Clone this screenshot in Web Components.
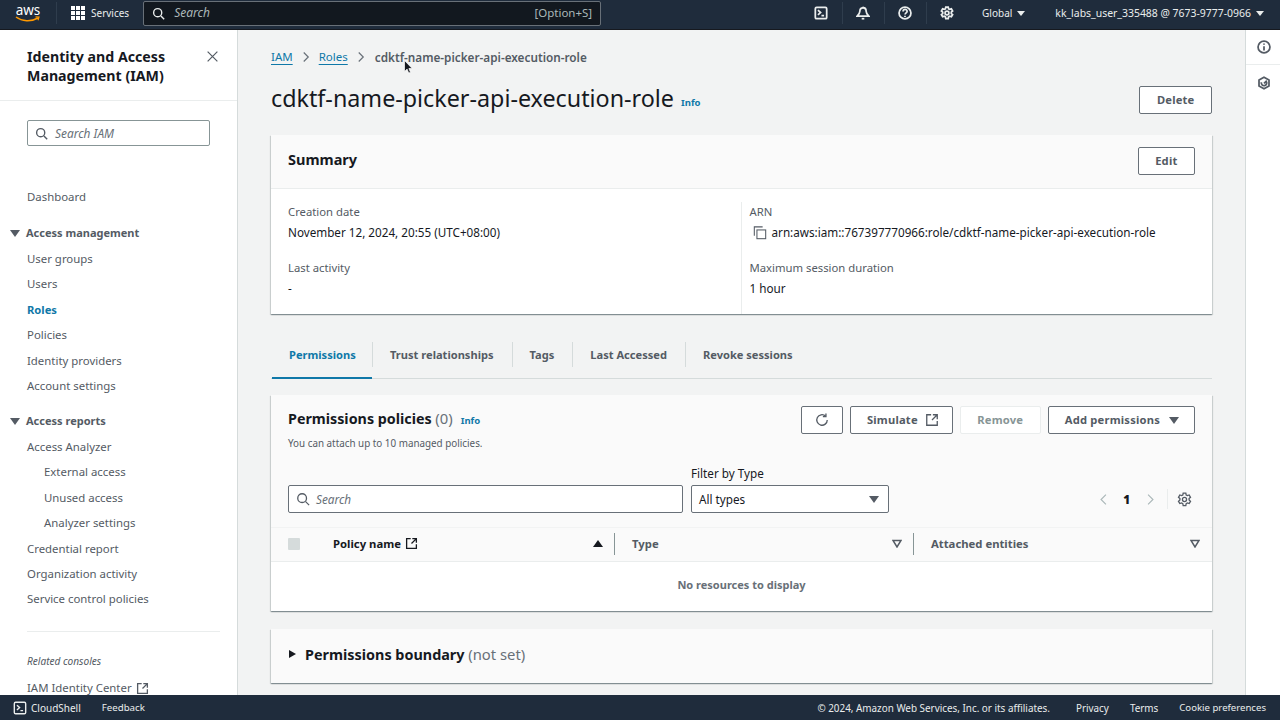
<!DOCTYPE html>
<html lang="en"><head><meta charset="utf-8"><title>IAM Role</title>
<style>
html,body{margin:0;padding:0;height:100%;overflow:hidden;background:#f2f3f3}
body{font:12px/18px "Noto Sans","Open Sans",sans-serif;color:#16191f}
</style></head><body>
<iam-app></iam-app>
<script>
const ICONS={
search:'<circle cx="7" cy="7" r="5"/><path d="M11 11l4 4"/>',
close:'<path d="M2 2l12 12M14 2L2 14"/>',
external:'<path d="M7 2H2v12h12V9" /><path d="M9 2h5v5M14 2L8 8"/>',
refresh:'<path d="M14 8a6 6 0 1 1-2-4.5"/><path d="M12.5 0.5v3.5H9"/>',
gear:'<path d="M6.6 1.2h2.8l.4 2 1.3.7 1.9-.7 1.4 2.5-1.5 1.3v1.6l1.5 1.3-1.4 2.4-1.9-.6-1.3.7-.4 2.1H6.6l-.4-2.1-1.3-.7-1.9.6-1.4-2.4L3.100 8.600V7l-1.500-1.300L3 3.200l1.900.7 1.300-.7z"/><circle cx="8" cy="8" r="2.200"/>',
left:'<path d="M11 2L5 8l6 6"/>',
right:'<path d="M5 2l6 6-6 6"/>',
shell:'<rect x="1.500" y="1.500" width="13" height="13" rx="1.500"/><path d="M4.500 4.800L7.500 7.500 4.500 10.200M8.500 11h3"/>',
bell:'<path d="M8 .8v1.200"/><path d="M8 2c-2.600 0-3.600 1.800-3.600 4 0 2.400-1 3.600-3 5.500h13.200c-2-1.900-3-3.100-3-5.500 0-2.200-1-4-3.600-4z"/><path d="M6.500 14.500h3"/>',
help:'<circle cx="8" cy="8" r="6.800"/><path d="M5.800 6.200c0-3 4.600-3 4.600-.2 0 1.800-2.300 1.800-2.300 3.700"/><path d="M8 11.200v1.300"/>',
info:'<circle cx="8" cy="8" r="6.800"/><path d="M8 7v5M8 4v1.500"/>',
hex:'<path d="M8 1.400l5.700 3.300v6.600L8 14.600l-5.700-3.300V4.700z"/><path d="M5 7.200a3.100 3.100 0 1 0 5.500-1.200L8 8.400"/>',
copy:'<path d="M11 1H1.500v10"/><rect x="4.500" y="4.500" width="10" height="10"/>'
};
function def(name,css,html,init){
  customElements.define(name,class extends HTMLElement{
    connectedCallback(){
      if(this.shadowRoot)return;
      const r=this.attachShadow({mode:'open'});
      r.innerHTML='<style>'+css+'</style>'+(typeof html==='function'?html(this):html);
      if(init)init(this,r);
    }
  });
}
const BLUE='#0f78a8';
def('aws-icon',':host{display:inline-flex;flex:none;vertical-align:middle}svg{display:block;fill:none;stroke:currentColor;stroke-width:var(--sw,1.7);width:100%;height:100%}',
  h=>`<svg viewBox="0 0 16 16">${ICONS[h.getAttribute('name')]}</svg>`);
def('aws-caret',':host{display:inline-block;flex:none;width:0;height:0;border-left:5px solid transparent;border-right:5px solid transparent;border-top:7px solid currentColor}','');

def('aws-button',`:host{display:inline-flex;box-sizing:border-box;height:28px;align-items:center;justify-content:center;gap:7px;padding:0 16.500px;background:#fff;border:1px solid #687078;border-radius:2px;color:#545b64;font-weight:700;font-size:11.200px;letter-spacing:.2px;white-space:nowrap}
:host([disabled]){border-color:#eaeded;color:#879596}`,'<slot></slot>');

def('side-link',`:host{display:flex;align-items:center;height:25.400px;color:#545b64;font-size:11.400px;padding-left:27px;white-space:nowrap}
:host([sub]){padding-left:44px}:host([active]){color:${BLUE};font-weight:700;font-size:11.200px}`,'<slot></slot>');
def('side-group',`:host{display:flex;align-items:center;height:26.400px;color:#545b64;font-weight:700;font-size:11px;padding-left:10px;gap:6px;white-space:nowrap}`,'<aws-caret></aws-caret><slot></slot>');

def('aws-topbar',`:host{display:flex;flex:none;align-items:center;height:30px;box-sizing:border-box;padding-bottom:3px;background:#1f2c3c;color:#eaeded;font-size:10px;border-bottom:1px solid #16191f;white-space:nowrap}
.logo{display:flex;flex-direction:column;align-items:center;width:26px;margin-left:15px;flex:none;color:#fff;font-size:13.500px;line-height:12px}
.logo svg{display:block;width:26px;height:7px;margin-top:0}
.sep{flex:none;width:1px;height:22px;background:#2f3d4d}
.svc{display:flex;align-items:center;gap:6px;margin-left:14px}
.grid{display:grid;grid-template-columns:repeat(3,4px);gap:1px}.grid i{width:4px;height:4px;background:#fff}
.search{display:flex;align-items:center;box-sizing:border-box;margin-left:14px;width:458px;height:25px;background:#12181f;border:1px solid #687078;border-radius:2px;padding:0 8px;color:#aab7b8;font-size:12px}
.search aws-icon{width:13px;height:13px;color:#eaeded;margin-right:9px}
.search em{flex:1}.search span{font-size:11.500px}
.ic{width:14px;height:14px;color:#eaeded;--sw:2}
.right{display:flex;align-items:center;margin-left:auto;padding-right:16px}
.right .sep{margin:0 13.500px}
.right aws-caret{border-left-width:4px;border-right-width:4px;border-top-width:5px;margin-left:5px}
.right .m{display:flex;align-items:center;font-size:10.450px}`,
`<div class="logo"><span>aws</span><svg viewBox="0 0 26 7"><path d="M1 1c6 4.500 15 5 22 1" fill="none" stroke="#f90" stroke-width="1.500"/><path d="M20.500 .8l3.500.3-1 3.200" fill="none" stroke="#f90" stroke-width="1.200"/></svg></div>
<span class="sep" style="margin-left:15px"></span>
<div class="svc"><div class="grid">${'<i></i>'.repeat(9)}</div><span>Services</span></div>
<div class="search"><aws-icon name="search"></aws-icon><em>Search</em><span>[Option+S]</span></div>
<div class="right">
<aws-icon class="ic" name="shell"></aws-icon><span class="sep"></span>
<aws-icon class="ic" name="bell"></aws-icon><span class="sep"></span>
<aws-icon class="ic" name="help"></aws-icon><span class="sep"></span>
<aws-icon class="ic" name="gear"></aws-icon>
<div class="m" style="margin-left:28px;font-size:10px">Global<aws-caret></aws-caret></div>
<div class="m" style="margin-left:30px">kk_labs_user_335488 @ 7673-9777-0966<aws-caret></aws-caret></div>
</div>`);

def('aws-sidenav',`:host{display:block;flex:none;width:238px;box-sizing:border-box;background:#fff;border-right:1px solid #d5dbdb;overflow:hidden;color:#545b64}
header{display:flex;justify-content:space-between;align-items:flex-start;height:71px;box-sizing:border-box;padding:17px 18px 0 27px;border-bottom:1px solid #eaeded;color:#16191f;font-weight:700;font-size:14.200px;line-height:19px}
header aws-icon{width:13px;height:13px;margin-top:3px;--sw:1.500;color:#545b64}
.s{display:flex;align-items:center;box-sizing:border-box;height:26px;margin:19px 27px 0;width:183px;border:1px solid #879596;border-radius:2px;padding:0 7px;font-style:italic;color:#687078;font-size:11.900px;gap:7px}
.s aws-icon{width:13px;height:13px;color:#545b64}
nav{margin-top:38.500px}
.g1{height:10.100px}.g2{height:9.300px}
hr{border:0;border-top:1px solid #eaeded;margin:19px 17px 0 27px}
.rc{padding-left:27px;font-style:italic;font-size:10.100px;margin-top:20px;height:23.300px}
.ext{width:13px;height:13px;margin-left:4px;--sw:1.600}`,
`<header><span>Identity and Access<br>Management (IAM)</span><aws-icon name="close"></aws-icon></header>
<div class="s"><aws-icon name="search"></aws-icon>Search IAM</div>
<nav>
<side-link>Dashboard</side-link><div class="g1"></div>
<side-group>Access management</side-group>
<side-link>User groups</side-link><side-link>Users</side-link><side-link active>Roles</side-link><side-link>Policies</side-link><side-link>Identity providers</side-link><side-link>Account settings</side-link>
<div class="g2"></div>
<side-group>Access reports</side-group>
<side-link>Access Analyzer</side-link><side-link sub>External access</side-link><side-link sub>Unused access</side-link><side-link sub>Analyzer settings</side-link><side-link>Credential report</side-link><side-link>Organization activity</side-link><side-link>Service control policies</side-link>
<hr>
<div class="rc">Related consoles</div>
<side-link>IAM Identity Center<aws-icon class="ext" name="external"></aws-icon></side-link>
</nav>`);

def('aws-breadcrumb',`:host{display:flex;align-items:center;height:18px;font-size:11.500px;color:#545b64;white-space:nowrap}
a{color:${BLUE};text-decoration:underline;text-underline-offset:3px;text-decoration-thickness:1px}
aws-icon{width:12px;height:12px;margin:0 7px;--sw:1.600;color:#687078}b{font-weight:600;font-size:11.750px;margin-left:1px}`,
`<a>IAM</a><aws-icon name="right"></aws-icon><a>Roles</a><aws-icon name="right"></aws-icon><b>cdktf-name-picker-api-execution-role</b>`);

def('aws-card',`:host{display:block;background:#fff;box-shadow:0 1px 1px 0 rgba(0,28,36,.3),1px 1px 1px 0 rgba(0,28,36,.12),-1px 1px 1px 0 rgba(0,28,36,.12);}`,'<slot></slot>');

def('kv-pair',`:host{display:block;font-size:11.700px;line-height:20px;color:#16191f}.k{color:#545b64;font-size:11.300px}
.v{display:flex;align-items:center;white-space:nowrap}aws-icon{width:14px;height:14px;margin:1px 5px 0 3px;--sw:1.200;color:#545b64}`,
h=>`<div class="k">${h.getAttribute('k')}</div><div class="v">${h.hasAttribute('copy')?'<aws-icon name="copy"></aws-icon>':''}<slot></slot></div>`);

def('role-summary',`:host{display:block}
.h{display:flex;justify-content:space-between;align-items:center;height:52px;padding:0 17px 1px;background:#fafafa;border-bottom:1px solid #eaeded;box-sizing:content-box}
h2{margin:0 0 4px;font-size:14.500px;font-weight:700}
.b{display:grid;grid-template-columns:1fr 1fr;height:125px;box-sizing:border-box;padding:13px 0 0}
.c{display:flex;flex-direction:column;gap:16px;padding-left:17px}
.c+.c{border-left:1px solid #eaeded;padding-left:8px;margin-left:-1px}`,
`<aws-card><div class="h"><h2>Summary</h2><aws-button>Edit</aws-button></div>
<div class="b"><div class="c"><kv-pair k="Creation date">November 12, 2024, 20:55 (UTC+08:00)</kv-pair><kv-pair k="Last activity">-</kv-pair></div>
<div class="c"><kv-pair k="ARN" copy>arn:aws:iam::767397770966:role/cdktf-name-picker-api-execution-role</kv-pair><kv-pair k="Maximum session duration">1 hour</kv-pair></div></div></aws-card>`);

def('aws-tabs',`:host{display:flex;height:39px;box-sizing:border-box;margin:26px 0 16px;border-bottom:1px solid #d5dbdb;font-weight:700;font-size:11.100px;color:#545b64;padding-left:1px}
.t{display:flex;align-items:center;padding:0 18px 0 17px;height:25px;margin-top:2px;border-left:1px solid #d5dbdb;white-space:nowrap}
.t:first-of-type{border-left:0;color:${BLUE};height:39px;box-sizing:border-box;margin-top:0;padding:0 17px 7px 17px;border-bottom:2px solid ${BLUE};width:100px}`,
`<div class="t">Permissions</div><div class="t">Trust relationships</div><div class="t">Tags</div><div class="t">Last Accessed</div><div class="t">Revoke sessions</div>`);

def('policies-panel',`:host{display:block}
.top{background:#fafafa;padding:11px 17px 14px}
.head{display:flex;justify-content:space-between;height:43px}
h2{margin:0;font-size:14.300px;font-weight:700;line-height:25px;white-space:nowrap}h2 span{font-weight:400;color:#687078;font-size:14.800px}
h2 small{font-size:9.500px;color:${BLUE};margin-left:8px;vertical-align:0}
p{margin:3px 0 0;font-size:9.850px;line-height:14px;color:#545b64}
.acts{display:flex;gap:7px;align-items:flex-start;height:28px}
.acts aws-icon{width:14px;height:14px;--sw:1.500}
.acts aws-caret{margin-left:2px}
.row{display:flex;align-items:flex-end;gap:8px;margin-top:15px}
.inp{display:flex;align-items:center;box-sizing:border-box;width:395px;height:28px;background:#fff;border:1px solid #687078;border-radius:2px;padding:0 7px;gap:6px;font-style:italic;color:#687078;font-size:11.800px}
.inp aws-icon{width:14px;height:14px;color:#545b64;--sw:1.500}
.flt{width:198px;font-size:11.700px}
.sel{display:flex;align-items:center;justify-content:space-between;box-sizing:border-box;height:28px;background:#fff;border:1px solid #687078;border-radius:2px;padding:0 9px 0 7px;margin-top:3px;color:#16191f}
.sel aws-caret{color:#545b64}
.pg{display:flex;align-items:center;margin-left:auto;height:28px;font-weight:700;font-size:11.700px;margin-right:3.500px}
.pg aws-icon{width:13px;height:13px;color:#aab7b8;--sw:1.400}
.pg .g{width:15px;height:15px;color:#545b64;--sw:1.400}
.pg .sep{width:1px;height:20px;background:#eaeded;margin:0 9px 0 10px}
.pg b{margin:0 13.500px}
.th{display:flex;align-items:center;height:35px;padding-bottom:2px;box-sizing:border-box;background:#fafafa;border-top:1px solid #f2f3f3;border-bottom:1px solid #eaeded;font-weight:700;font-size:11.300px;color:#545b64}
.cb{width:12px;height:12px;background:#d5dbdb;margin:0 0 0 17px;border-radius:1px;flex:none}
.pn{display:flex;align-items:center;width:314px;box-sizing:border-box;padding-left:33px;color:#16191f;gap:4px}
.pn aws-icon{width:13px;height:13px;--sw:1.600}
.pn aws-caret{margin-left:auto;margin-right:11px;border-top:0;border-bottom:7px solid #16191f;border-left-width:5px;border-right-width:5px}
.col{display:flex;align-items:center;justify-content:space-between;height:22px;border-left:1px solid #879596;box-sizing:border-box;padding:0 11px 0 17px}
.tri{display:block;width:10px;height:9px;flex:none}
.empty{height:49px;box-sizing:border-box;padding-bottom:4px;display:flex;align-items:center;justify-content:center;font-weight:700;color:#687078;font-size:11px}`,
`<aws-card>
<div class="top"><div class="head"><div><h2>Permissions policies <span>(0)</span><small>Info</small></h2><p>You can attach up to 10 managed policies.</p></div>
<div class="acts"><aws-button style="padding:0 13px"><aws-icon name="refresh"></aws-icon></aws-button><aws-button style="padding:0 13px 0 16px">Simulate<aws-icon name="external"></aws-icon></aws-button><aws-button disabled>Remove</aws-button><aws-button style="padding:0 15px 0 16px">Add permissions<aws-caret></aws-caret></aws-button></div></div>
<div class="row"><div class="inp"><aws-icon name="search"></aws-icon>Search</div>
<div class="flt">Filter by Type<div class="sel">All types<aws-caret></aws-caret></div></div>
<div class="pg"><aws-icon name="left"></aws-icon><b>1</b><aws-icon name="right"></aws-icon><span class="sep"></span><aws-icon class="g" name="gear"></aws-icon></div></div></div>
<div class="th"><div class="cb"></div><div class="pn">Policy name<aws-icon name="external"></aws-icon><aws-caret></aws-caret></div>
<div class="col" style="width:299px">Type<svg class="tri" viewBox="0 0 10 9"><path d="M1 1.500h8L5 8z" fill="none" stroke="#545b64" stroke-width="1.500"/></svg></div>
<div class="col" style="flex:1;padding-right:12px">Attached entities<svg class="tri" viewBox="0 0 10 9"><path d="M1 1.500h8L5 8z" fill="none" stroke="#545b64" stroke-width="1.500"/></svg></div></div>
<div class="empty">No resources to display</div>
</aws-card>`);

def('boundary-panel',`:host{display:block;margin-top:18px}
.r{display:flex;align-items:center;height:54px;box-sizing:border-box;padding:0 0 4px 18px;background:#fafafa;font-size:14.400px;font-weight:700;gap:9px}
.r span{font-weight:400;color:#687078;font-size:14.800px}
i{width:0;height:0;border-top:4.500px solid transparent;border-bottom:4.500px solid transparent;border-left:7px solid #16191f}`,
`<aws-card><div class="r"><i></i><div>Permissions boundary <span>(not set)</span></div></div></aws-card>`);

def('role-page',`:host{display:block;flex:1;min-width:0;overflow:hidden;padding:18px 33px 0 33px;box-sizing:border-box;background:#f2f3f3}
.title{display:flex;align-items:flex-start;justify-content:space-between;height:54px;margin-top:15px}
h1{margin:0;font-weight:400;font-size:23.300px;line-height:34px;color:#16191f;white-space:nowrap}
h1 small{font-size:9.500px;font-weight:700;color:${BLUE};margin-left:1px;vertical-align:1px;line-height:1}
aws-button{margin-top:5px}`,
`<aws-breadcrumb></aws-breadcrumb>
<div class="title"><h1>cdktf-name-picker-api-execution-role <small>Info</small></h1><aws-button>Delete</aws-button></div>
<role-summary></role-summary><aws-tabs></aws-tabs><policies-panel></policies-panel><boundary-panel></boundary-panel>`);

def('aws-rail',`:host{display:flex;flex:none;flex-direction:column;width:35px;box-sizing:border-box;background:#fff;border-left:1px solid #d5dbdb;color:#545b64}
div{display:flex;align-items:center;justify-content:center;height:35px;padding-left:1px}
div:first-of-type{border-bottom:1px solid #eaeded;box-sizing:border-box}
aws-icon{width:14px;height:14px;--sw:2}`,
`<div><aws-icon name="info"></aws-icon></div><div><aws-icon name="hex"></aws-icon></div>`);

def('aws-footer',`:host{display:flex;flex:none;align-items:center;height:25px;background:#1f2c3c;color:#eaeded;font-size:10px;white-space:nowrap;padding:0 14px 0 13px}
aws-icon{width:14px;height:14px;margin-right:4px;--sw:1.600}
.f{margin-left:21px;font-size:9.700px}.r{margin-left:auto;display:flex;font-size:9.900px}.r span{margin-left:21px}.r span:first-child{margin-right:5px;margin-left:0}.r .c{font-size:9.600px}`,
`<aws-icon name="shell"></aws-icon><span>CloudShell</span><span class="f">Feedback</span><div class="r"><span>© 2024, Amazon Web Services, Inc. or its affiliates.</span><span>Privacy</span><span>Terms</span><span class="c">Cookie preferences</span></div>`);

def('iam-app',`:host{display:flex;flex-direction:column;height:720px;width:1280px;overflow:hidden;position:relative}
.m{display:flex;flex:1;min-height:0}
.cursor{position:absolute;left:404px;top:60px;width:9px;height:15px}`,
`<aws-topbar></aws-topbar><div class="m"><aws-sidenav></aws-sidenav><role-page></role-page><aws-rail></aws-rail></div><aws-footer></aws-footer>
<svg class="cursor" viewBox="0 0 9 15"><path d="M0.500 0.500v11l2.600-2.400 1.600 4 1.800-.8-1.600-3.800h3.300z" fill="#16191f" stroke="#fff" stroke-width=".7"/></svg>`);
</script>
</body></html>
